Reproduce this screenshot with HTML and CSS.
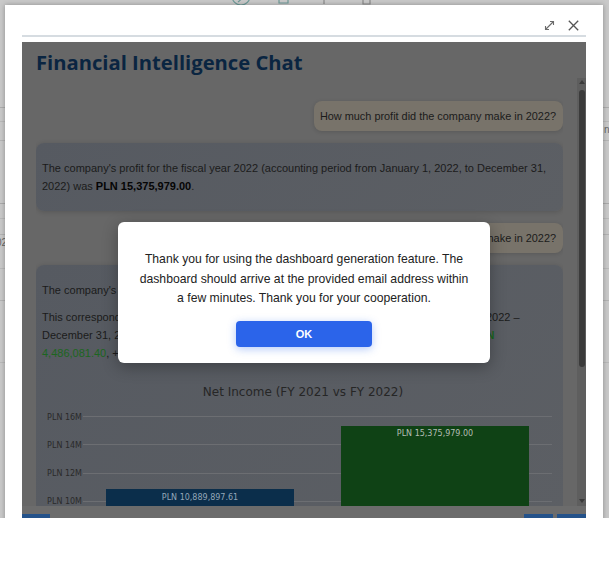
FILE: index.html
```html
<!DOCTYPE html>
<html lang="en">
<head>
<meta charset="utf-8">
<title>Financial Intelligence Chat</title>
<link rel="stylesheet" href="styles.css">
</head>
<body>
<div class="page">
  <div class="bg-toolbar">
    <svg width="609" height="6" viewBox="0 0 609 6">
      <path d="M232 -4 A9 9 0 0 0 250 -4" fill="none" stroke="#6f9c99" stroke-width="1.2"/>
      <path d="M238 2 L244 -3" stroke="#6f9c99" stroke-width="1.2"/>
      <path d="M279 -2 V3 H288 V-2" fill="none" stroke="#6f9c99" stroke-width="1.2"/>
      <path d="M324 -2 V4" stroke="#8a8a8a" stroke-width="1.2"/>
      <path d="M363 -2 V4 H370 V-2" fill="none" stroke="#8a8a8a" stroke-width="1.2"/>
    </svg>
  </div>
  <span class="bg-txt bg-txt-l">02</span>
  <span class="bg-txt bg-txt-r">nt</span>

  <div class="dialog">
    <div class="dlg-head">
      <svg class="dlg-ic" width="11" height="11" viewBox="0 0 11 11">
        <path d="M1.5 9.5 L9.5 1.5 M6 1.5 H9.5 V5 M1.5 6 V9.5 H5" fill="none" stroke="#6b6b6b" stroke-width="1.1"/>
      </svg>
      <svg class="dlg-ic" width="11" height="11" viewBox="0 0 11 11">
        <path d="M0.8 0.8 L10.2 10.2 M10.2 0.8 L0.8 10.2" fill="none" stroke="#555" stroke-width="1.3"/>
      </svg>
    </div>
    <div class="dlg-rule"></div>

    <div class="frame">
      <h1 class="app-title">Financial Intelligence Chat</h1>
      <div class="chat">
        <div class="msgs">
          <div class="msg user">How much profit did the company make in 2022?</div>
          <div class="msg bot">
            <p>The company's profit for the fiscal year 2022 (accounting period from January 1, 2022, to December 31,<br>2022) was <b>PLN 15,375,979.00</b>.</p>
          </div>
          <div class="msg user">How much profit did the company make in 2022?</div>
          <div class="msg bot">
            <p>The company's net income for the fiscal year 2022 amounted to PLN 15,375,979.00.</p>
            <p>This corresponds to the result for the entire accounting period of the fiscal year (January 1, 2022 –<br>December 31, 2022). Compared with the preceding fiscal year, net income increased by <b class="up">PLN</b><br><span class="up">4,486,081.40</span>, +41.19% year over year.</p>
            <svg class="chart" width="514" height="140" viewBox="0 0 514 140">
              <text class="c-title" x="261" y="25" text-anchor="middle">Net Income (FY 2021 vs FY 2022)</text>
              <g class="grid">
                <line x1="41" x2="510" y1="45.5" y2="45.5"/>
                <line x1="41" x2="510" y1="73.5" y2="73.5"/>
                <line x1="41" x2="510" y1="102.5" y2="102.5"/>
                <line x1="41" x2="510" y1="130.5" y2="130.5"/>
              </g>
              <g class="axis">
                <text x="40" y="49" text-anchor="end">PLN 16M</text>
                <text x="40" y="77" text-anchor="end">PLN 14M</text>
                <text x="40" y="105" text-anchor="end">PLN 12M</text>
                <text x="40" y="133" text-anchor="end">PLN 10M</text>
              </g>
              <rect class="bar-a" x="64" y="118" width="188" height="40"/>
              <rect class="bar-b" x="299" y="55" width="188" height="100"/>
              <text class="lab lab-a" x="158" y="129" text-anchor="middle">PLN 10,889,897.61</text>
              <text class="lab lab-b" x="393" y="65" text-anchor="middle">PLN 15,375,979.00</text>
            </svg>
          </div>
        </div>
        <div class="sb">
          <span class="sb-up"></span>
          <span class="sb-thumb"></span>
          <span class="sb-fill"></span>
          <span class="sb-down"></span>
        </div>
      </div>
      <div class="foot">
        <span class="fbtn fbtn-l"></span>
        <span class="foot-gap"></span>
        <span class="fbtn"></span>
        <span class="fbtn"></span>
      </div>

      <div class="modal">
        <p class="modal-text">Thank you for using the dashboard generation feature. The<br>dashboard should arrive at the provided email address within<br>a few minutes. Thank you for your cooperation.</p>
        <button class="ok">OK</button>
      </div>
    </div>
  </div>
</div>
</body>
</html>
```
FILE: styles.css
```css
* { box-sizing: border-box; }

body {
  margin: 0;
  background: #fff;
  font-family: "Liberation Sans", Arial, sans-serif;
}

.page {
  position: relative;
  height: 518px;
  overflow: hidden;
  background-color: #c9c9c9;
  background-image:
    linear-gradient(#adadad, #adadad),
    linear-gradient(#b9b9b9, #b9b9b9),
    linear-gradient(#b5b5b5, #b5b5b5),
    linear-gradient(#a9a9a9, #a9a9a9),
    linear-gradient(#b9b9b9, #b9b9b9),
    linear-gradient(#b3b3b3, #b3b3b3),
    linear-gradient(#b9b9b9, #b9b9b9),
    linear-gradient(#b3b3b3, #b3b3b3),
    linear-gradient(#b9b9b9, #b9b9b9);
  background-repeat: no-repeat;
  background-size: 100% 1px;
  background-position:
    0 107px, 0 121px, 0 140px, 0 203px, 0 218px, 0 234px, 0 268px, 0 300px, 0 362px;
}

.bg-toolbar { height: 5px; overflow: hidden; }
.bg-toolbar svg { display: block; }

.bg-txt {
  position: absolute;
  font-size: 10px;
  color: #666;
}
.bg-txt-l { left: -4px; top: 237px; }
.bg-txt-r { left: 604px; top: 124px; }

.dialog {
  position: absolute;
  left: 5px;
  top: 5px;
  width: 598px;
  height: 540px;
  background: #fff;
  box-shadow: 0 0 5px rgba(0, 0, 0, 0.3);
  padding: 0 17px;
}

.dlg-head {
  height: 30px;
  display: flex;
  justify-content: flex-end;
  align-items: flex-end;
  gap: 13px;
  padding: 0 7px 4px 0;
}
.dlg-ic { display: block; }

.dlg-rule {
  height: 2px;
  background: #d6dce1;
  margin-bottom: 5px;
}

.frame {
  position: relative;
  height: 476px;
  background: #676767;
  overflow: hidden;
  display: flex;
  flex-direction: column;
}

.app-title {
  margin: 0;
  padding: 6px 14px 2px;
  font: 700 20.2px/28px "Open Sans", "Noto Sans", sans-serif;
  color: #0a2541;
}

.chat {
  display: flex;
  height: 428px;
  padding-left: 14px;
}

.msgs {
  width: 527px;
  display: flex;
  flex-direction: column;
  gap: 12px;
  padding-top: 23px;
  overflow: hidden;
  font-size: 11px;
  line-height: 18px;
  color: #1b1b1b;
}

.msg { border-radius: 8px; }

.user {
  align-self: flex-end;
  background: #78736a;
  padding: 6px 7px 6px 6px;
  box-shadow: 0 1px 4px rgba(0, 0, 0, 0.14);
  white-space: nowrap;
  font-size: 10.9px;
}

.bot {
  background: linear-gradient(135deg, #565a61 0%, #5c5f64 100%);
  padding: 7px 7px 7px 6px;
  box-shadow: 0 1px 5px rgba(0, 0, 0, 0.16);
  flex-shrink: 0;
}
.bot p { margin: 9px 0; white-space: nowrap; }
.bot b { color: #050505; }
.bot .up { color: #1c6620; }
.bot b.up { color: #1a661f; }

.chart { display: block; }
.c-title {
  font: 12px "DejaVu Sans", Verdana, sans-serif;
  fill: #262626;
}
.grid line { stroke: #6c6e72; stroke-width: 1; }
.axis text {
  font: 8px "DejaVu Sans", Verdana, sans-serif;
  fill: #2a2a2a;
}
.bar-a { fill: #0b2e4b; }
.bar-b { fill: #0f4215; }
.lab { font: 8px "DejaVu Sans", Verdana, sans-serif; }
.lab-a { fill: #93a6b8; }
.lab-b { fill: #b3bcb3; }

.sb {
  margin-left: 14px;
  width: 9px;
  background: #5e5e5e;
  display: flex;
  flex-direction: column;
  align-items: center;
  padding: 2px 0 3px;
}
.sb-up {
  width: 0; height: 0;
  border-left: 3px solid transparent;
  border-right: 3px solid transparent;
  border-bottom: 4px solid #3a3a3a;
}
.sb-thumb {
  margin-top: 6px;
  width: 6px;
  height: 277px;
  border-radius: 3px;
  background: #3b3b3b;
}
.sb-fill { flex: 1; }
.sb-down {
  width: 0; height: 0;
  border-left: 3px solid transparent;
  border-right: 3px solid transparent;
  border-top: 4px solid #3a3a3a;
}

.foot {
  height: 12px;
  background: #6c6c6c;
  display: flex;
  align-items: flex-end;
  gap: 4px;
}
.fbtn {
  width: 29px;
  height: 4px;
  background: #24528a;
}
.fbtn-l { width: 28px; }
.foot-gap { flex: 1; }

.modal {
  position: absolute;
  left: 96px;
  top: 180px;
  width: 372px;
  height: 141px;
  background: #fff;
  border-radius: 6px;
  box-shadow: 0 4px 16px rgba(0, 0, 0, 0.3);
  padding: 28px 10px 0;
  text-align: center;
}
.modal-text {
  margin: 0 0 12px;
  font-size: 12.2px;
  line-height: 19.5px;
  color: #222;
  white-space: nowrap;
}
.ok {
  width: 136px;
  height: 26px;
  border: 0;
  border-radius: 4px;
  background: #2b64ea;
  color: #fff;
  font: 700 11px "Liberation Sans", Arial, sans-serif;
  box-shadow: 0 2px 8px rgba(37, 99, 235, 0.35);
  cursor: pointer;
}
```
